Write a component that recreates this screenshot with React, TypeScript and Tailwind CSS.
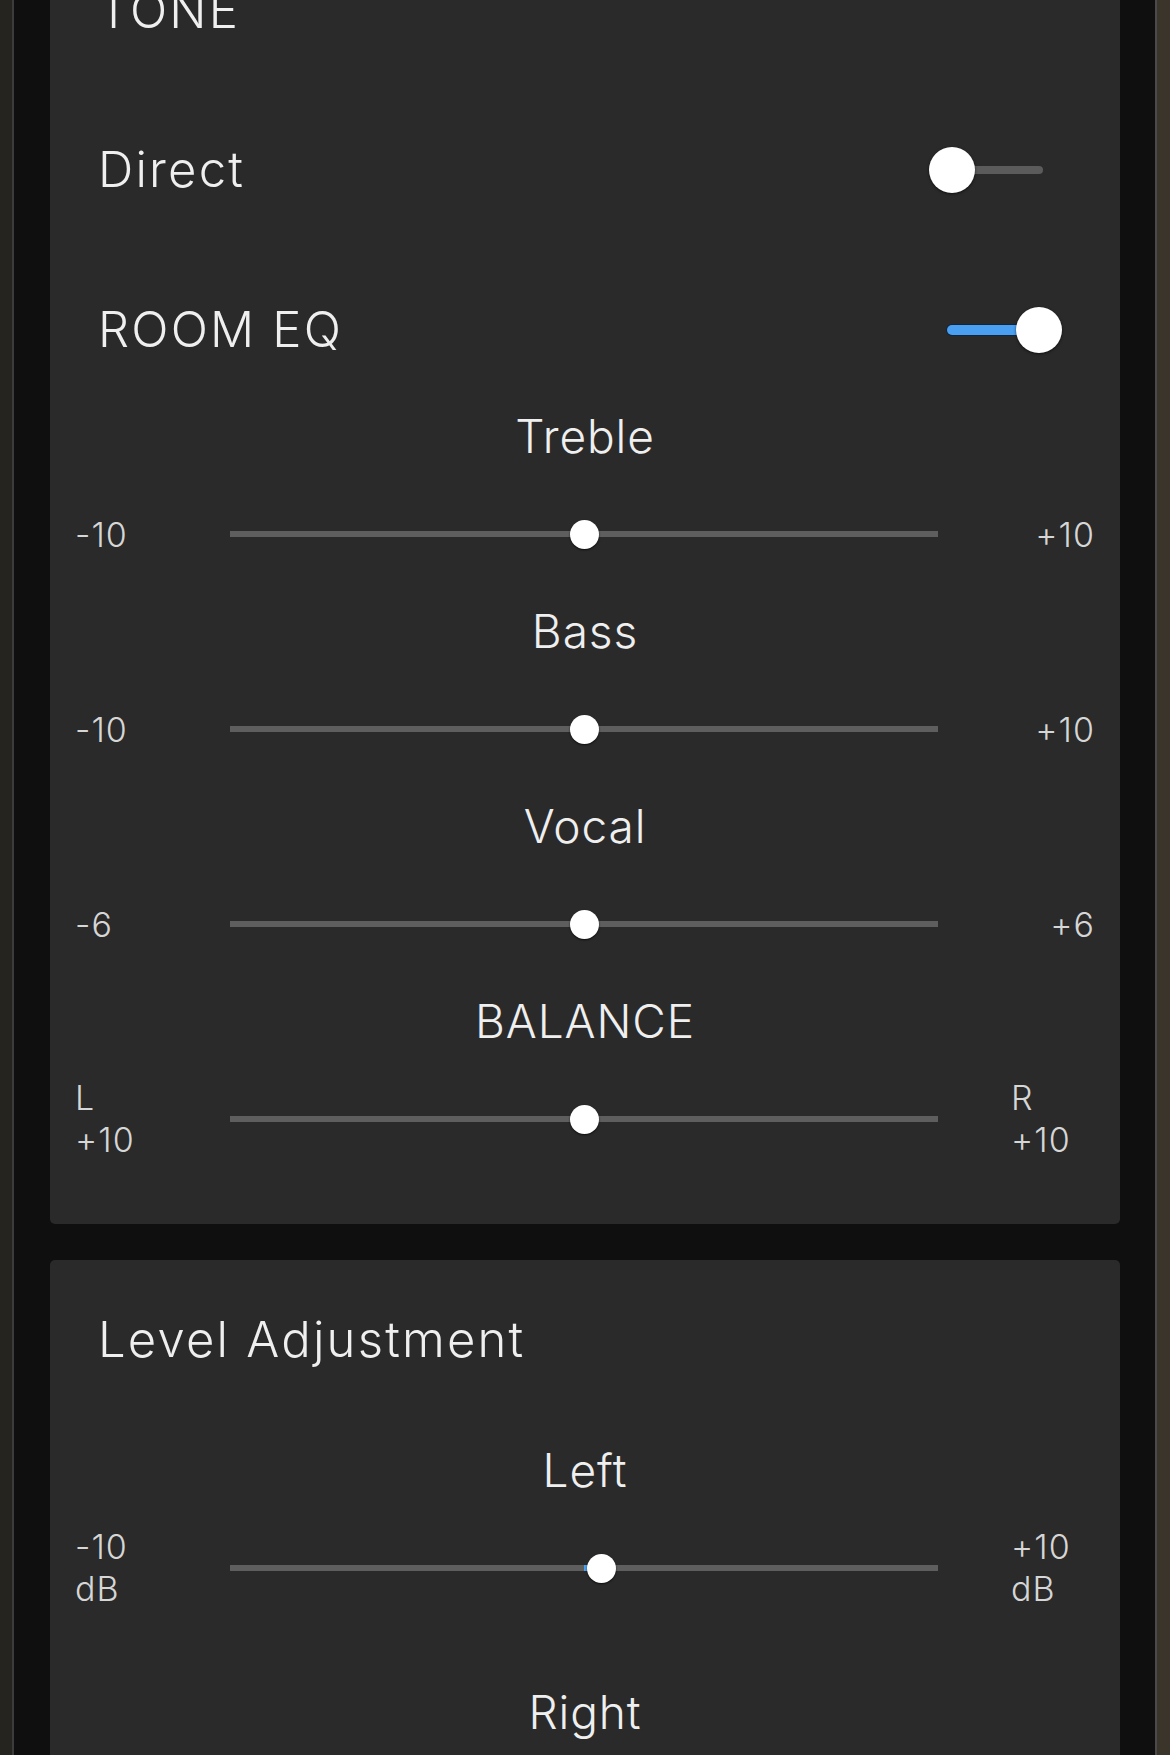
import { ReactNode } from "react";

const font = { fontFamily: "Inter, 'Noto Sans', sans-serif" };

type Side = { lines: string[]; stacked?: boolean };

const Toggle = ({ on }: { on: boolean }) => (
  <div className="relative w-[133px] h-[46px] shrink-0">
    <div
      className={
        on
          ? "absolute left-[18px] top-[18px] w-[96px] h-[10px] rounded-full bg-[#4a9ff0] ring-1 ring-[#10263d]"
          : "absolute left-[18px] top-[19px] w-[96px] h-[8px] rounded-full bg-[#5b5b5b]"
      }
    />
    <div
      className={
        on
          ? "absolute right-0 top-0 w-[46px] h-[46px] rounded-full bg-white shadow-[0_1px_3px_rgba(0,0,0,0.6)]"
          : "absolute left-0 top-0 w-[46px] h-[46px] rounded-full bg-white shadow-[0_1px_3px_rgba(0,0,0,0.6)]"
      }
    />
  </div>
);

const SideLabel = ({ side, right }: { side: Side; right?: boolean }) => {
  if (side.stacked) {
    return (
      <div className={right ? "w-[157px] pl-[73px]" : "w-[155px]"}>
        <div className="text-[34px] leading-[42px] font-light tracking-[0.03em] text-[#d6d6d6]">
          {side.lines.map((l) => (
            <div key={l}>{l}</div>
          ))}
        </div>
      </div>
    );
  }
  return (
    <div
      className={
        right
          ? "w-[157px] text-right text-[34px] font-light tracking-[0.03em] text-[#d6d6d6]"
          : "w-[155px] text-[34px] font-light tracking-[0.03em] text-[#d6d6d6]"
      }
    >
      {side.lines[0]}
    </div>
  );
};

const Slider = ({
  label,
  min,
  max,
  value,
  left,
  right,
}: {
  label: string;
  min: number;
  max: number;
  value: number;
  left: Side;
  right: Side;
}) => {
  const pct = ((value - min) / (max - min)) * 100;
  return (
    <div className="flex flex-col">
      <div className="h-[60px] flex items-center justify-center text-[46px] font-light tracking-[0.02em] text-[#efefef]">
        {label}
      </div>
      <div className="h-[60px] mt-[38px] px-[25px] flex items-center">
        <SideLabel side={left} />
        <div className="relative flex-1 h-[6px] bg-[#5e5e5e]">
          {pct > 50 && (
            <div
              className="absolute top-0 h-[6px] left-1/2 bg-[#4a9ff0]"
              style={{ width: `${pct - 50}%` }}
            />
          )}
          <div
            className="absolute top-1/2 w-[29px] h-[29px] -ml-[14.5px] -mt-[14.5px] rounded-full bg-white shadow-[0_1px_2px_rgba(0,0,0,0.7)]"
            style={{ left: `${pct}%` }}
          />
        </div>
        <SideLabel side={right} right />
      </div>
    </div>
  );
};

const Heading = ({ children, toggle }: { children: ReactNode; toggle?: ReactNode }) => (
  <div className="h-[60px] pl-[48px] pr-[58px] flex items-center justify-between">
    <span className="text-[49px] font-light tracking-[0.045em] text-[#efefef]">
      {children}
    </span>
    {toggle}
  </div>
);

export default function App() {
  return (
    <div
      className="w-[1170px] h-[1755px] overflow-hidden flex bg-[#0f0f0f]"
      style={font}
    >
      {/* left edge of the screen behind */}
      <div className="w-[14px] shrink-0 bg-[#26241f] border-r-2 border-[#3c3c3c]" />

      <div className="flex-1 flex flex-col gap-[36px] pl-[36px] pr-[35px] -mt-[60px]">
        {/* TONE card */}
        <div className="bg-[#2a2a2a] rounded-[5px] pt-[41px] pb-[75px] flex flex-col">
          <Heading>TONE</Heading>
          <div className="mt-[99px]">
            <Heading toggle={<Toggle on={false} />}>Direct</Heading>
          </div>
          <div className="mt-[100px]">
            <Heading toggle={<Toggle on />}>ROOM EQ</Heading>
          </div>
          <div className="mt-[46px] flex flex-col gap-[37px]">
            <Slider
              label="Treble"
              min={-10}
              max={10}
              value={0}
              left={{ lines: ["-10"] }}
              right={{ lines: ["+10"] }}
            />
            <Slider
              label="Bass"
              min={-10}
              max={10}
              value={0}
              left={{ lines: ["-10"] }}
              right={{ lines: ["+10"] }}
            />
            <Slider
              label="Vocal"
              min={-6}
              max={6}
              value={0}
              left={{ lines: ["-6"] }}
              right={{ lines: ["+6"] }}
            />
            <Slider
              label="BALANCE"
              min={-10}
              max={10}
              value={0}
              left={{ lines: ["L", "+10"], stacked: true }}
              right={{ lines: ["R", "+10"], stacked: true }}
            />
          </div>
        </div>

        {/* Level Adjustment card */}
        <div className="bg-[#2a2a2a] rounded-[5px] pt-[50px] pb-[60px] flex flex-col">
          <Heading>Level Adjustment</Heading>
          <div className="mt-[70px] flex flex-col gap-[84px]">
            <Slider
              label="Left"
              min={-10}
              max={10}
              value={0.5}
              left={{ lines: ["-10", "dB"], stacked: true }}
              right={{ lines: ["+10", "dB"], stacked: true }}
            />
            <div className="h-[60px] flex items-center justify-center text-[46px] font-light tracking-[0.02em] text-[#efefef]">
              Right
            </div>
          </div>
        </div>
      </div>

      {/* right edge */}
      <div className="w-[15px] shrink-0 bg-[#3a342b] border-l-2 border-[#4a4a4a]" />
    </div>
  );
}
